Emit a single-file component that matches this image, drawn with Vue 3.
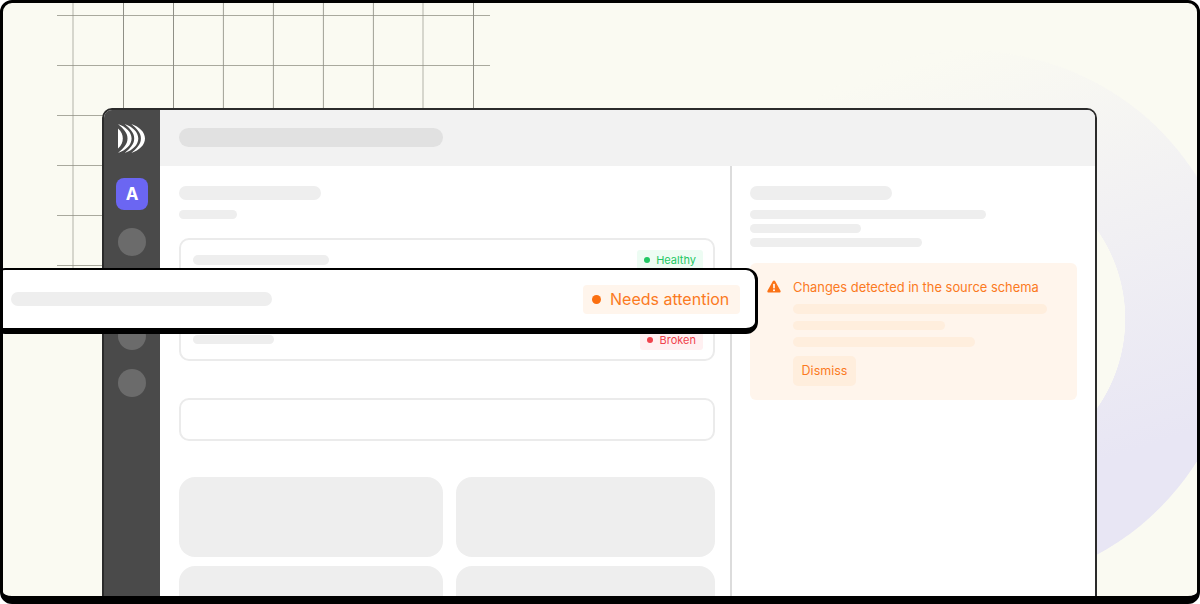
<script setup>
const hLines = [12.5, 62.5, 112.5, 162.5, 212.5, 262.5]
const vLines = [
  { x: 70, o: 0.45, w: 1.5 },
  { x: 120.5, o: 1, w: 1 },
  { x: 170.5, o: 1, w: 1 },
  { x: 220.4, o: 0.85, w: 1 },
  { x: 270.4, o: 0.85, w: 1 },
  { x: 320.4, o: 0.85, w: 1 },
  { x: 370.4, o: 0.85, w: 1 },
  { x: 420, o: 0.45, w: 1.5 },
  { x: 470.5, o: 1, w: 1 }
]
const navDots = [1, 2, 3, 4]
const alertLines = ['l1', 'l2', 'l3']
</script>

<template>
  <div class="frame">
    <div class="ring"></div>
    <svg class="grid" width="490" height="265" viewBox="0 0 490 265">
      <line v-for="y in hLines" :key="'h' + y" x1="54" x2="487" :y1="y" :y2="y" stroke="#a9a99e" />
      <line
        v-for="v in vLines"
        :key="'v' + v.x"
        :x1="v.x"
        :x2="v.x"
        y1="0"
        y2="265"
        stroke="#8f8f86"
        :stroke-opacity="v.o"
        :stroke-width="v.w"
      />
    </svg>

    <div class="window">
      <aside class="sidebar">
        <svg class="logo" width="28" height="29" viewBox="0 0 28 29" fill="#fff">
          <path d="M0 4.5C3.4 7.5 4.8 10.8 4.8 14.5C4.8 18.2 3.4 21.5 0 24.5Z" />
          <path d="M0 0C8 3 13.6 8 13.6 14.5C13.6 21 8 26 0 29C5 24.5 9.5 20.5 9.5 14.5C9.5 8.5 5 4.500 0 0Z" />
          <path d="M6.700 0C14.700 3 20.300 8 20.300 14.500C20.300 21 14.700 26 6.700 29C11.700 24.500 16.200 20.500 16.200 14.500C16.200 8.500 11.700 4.500 6.700 0Z" />
          <path d="M13.400 0C21.400 3 27 8 27 14.500C27 21 21.400 26 13.400 29C18.400 24.500 22.900 20.500 22.900 14.500C22.900 8.500 18.400 4.500 13.400 0Z" />
        </svg>
        <div class="avatar">A</div>
        <div class="nav-dots">
          <span v-for="d in navDots" :key="d" class="nav-dot"></span>
        </div>
      </aside>

      <div class="content">
        <header class="topbar"><span class="top-pill"></span></header>
        <div class="panes">
          <section class="main">
            <div class="sk title-pill"></div>
            <div class="sk sub-pill"></div>
            <div class="list-card">
              <div class="row">
                <span class="sk row-pill-a"></span>
                <span class="badge healthy"><i class="dot"></i>Healthy</span>
              </div>
              <div class="row"></div>
              <div class="row">
                <span class="sk row-pill-b"></span>
                <span class="badge broken"><i class="dot"></i>Broken</span>
              </div>
            </div>
            <div class="empty-card"></div>
            <div class="tiles">
              <div class="tile"></div>
              <div class="tile"></div>
              <div class="tile"></div>
              <div class="tile"></div>
            </div>
          </section>

          <section class="side">
            <div class="sk side-title"></div>
            <div class="side-lines">
              <div class="sk sl1"></div>
              <div class="sk sl2"></div>
              <div class="sk sl3"></div>
            </div>
            <div class="alert">
              <svg class="warn" width="14" height="13" viewBox="0 0 14 13">
                <path
                  d="M5.900 1.100C6.400 .2 7.600 .2 8.100 1.100L13.500 10.700C14 11.600 13.400 12.600 12.400 12.600H1.600C.6 12.600 0 11.600 .5 10.700Z"
                  fill="#fb7316"
                />
                <rect x="6.200" y="3.800" width="1.600" height="4.600" rx=".7" fill="#fff" />
                <circle cx="7" cy="10.200" r="1" fill="#fff" />
              </svg>
              <div class="alert-body">
                <div class="alert-title">Changes detected in the source schema</div>
                <div v-for="l in alertLines" :key="l" class="alert-line" :class="l"></div>
                <button class="dismiss" type="button">Dismiss</button>
              </div>
            </div>
          </section>
        </div>
      </div>
    </div>

    <div class="band">
      <span class="sk band-pill"></span>
      <span class="band-badge"><i class="band-dot"></i>Needs attention</span>
    </div>
  </div>
</template>

<style scoped>
.frame {
  position: relative;
  box-sizing: border-box;
  width: 1200px;
  height: 604px;
  overflow: hidden;
  border: solid #000;
  border-width: 3px 3px 8px;
  border-radius: 12px;
  background: #fafaf2;
  padding: 105px 0 0 99px;
  font-family: Inter, "Liberation Sans", sans-serif;
}
.ring {
  position: absolute;
  left: 699px;
  top: 48px;
  width: 536px;
  height: 536px;
  border-radius: 50%;
  background: linear-gradient(162deg, #fafaf2 12%, #e8e6f4 76%);
  -webkit-mask: radial-gradient(circle, transparent 155px, #000 155.5px);
  mask: radial-gradient(circle, transparent 155px, #000 155.5px);
}
.grid {
  position: absolute;
  left: 0;
  top: 0;
}
.window {
  position: relative;
  box-sizing: border-box;
  display: flex;
  width: 995px;
  height: 510px;
  overflow: hidden;
  border: 2px solid #2b2b2b;
  border-radius: 10px;
  background: #fff;
}
.sidebar {
  display: flex;
  flex-direction: column;
  align-items: center;
  flex: 0 0 56px;
  padding-top: 14px;
  box-sizing: border-box;
  background: #4a4a4a;
}
.logo {
  display: block;
}
.avatar {
  display: flex;
  align-items: center;
  justify-content: center;
  width: 32px;
  height: 32px;
  margin-top: 25px;
  border-radius: 8px;
  background: #6b66f2;
  color: #fff;
  font-size: 17px;
  font-weight: 700;
}
.nav-dots {
  display: flex;
  flex-direction: column;
  gap: 19px;
  margin-top: 18px;
}
.nav-dot {
  width: 28px;
  height: 28px;
  border-radius: 50%;
  background: #6b6b6b;
}
.content {
  flex: 1;
  min-width: 0;
}
.topbar {
  box-sizing: border-box;
  display: flex;
  align-items: center;
  height: 56px;
  padding: 0 0 1px 19px;
  background: #f2f2f2;
}
.top-pill {
  width: 264px;
  height: 19px;
  border-radius: 10px;
  background: #e1e1e1;
}
.panes {
  display: flex;
}
.main {
  box-sizing: border-box;
  flex: 0 0 570px;
  padding: 20px 15px 0 19px;
}
.sk {
  display: block;
  border-radius: 8px;
  background: #eeeeee;
}
.title-pill {
  width: 142px;
  height: 14px;
}
.sub-pill {
  width: 58px;
  height: 9px;
  margin-top: 10px;
}
.list-card {
  box-sizing: border-box;
  display: grid;
  grid-template-rows: 40px 40px 39px;
  height: 123px;
  margin-top: 19px;
  padding: 0 10px 0 12px;
  border: 2px solid #ebebeb;
  border-radius: 10px;
}
.row {
  display: flex;
  align-items: center;
  justify-content: space-between;
}
.row-pill-a {
  width: 136px;
  height: 10px;
}
.row-pill-b {
  width: 81px;
  height: 9px;
}
.badge {
  display: flex;
  align-items: center;
  height: 20px;
  padding: 0 7px;
  gap: 6px;
  border-radius: 3px;
  font-size: 11px;
  line-height: 20px;
}
.dot {
  width: 6px;
  height: 6px;
  border-radius: 50%;
  background: currentColor;
}
.healthy {
  background: #edfcf3;
  color: #22c763;
}
.broken {
  gap: 7px;
  background: #fff0f1;
  color: #f0434d;
}
.empty-card {
  box-sizing: border-box;
  height: 43px;
  margin-top: 37px;
  border: 2px solid #ebebeb;
  border-radius: 10px;
}
.tiles {
  display: grid;
  grid-template-columns: 264px 259px;
  grid-auto-rows: 80px;
  column-gap: 13px;
  row-gap: 9px;
  margin-top: 36px;
}
.tile {
  border-radius: 16px;
  background: #eeeeee;
}
.side {
  box-sizing: border-box;
  flex: 1;
  min-width: 0;
  min-height: 440px;
  padding: 20px 18px 0;
  border-left: 2px solid #dcdcdc;
}
.side-title {
  width: 142px;
  height: 14px;
}
.side-lines {
  display: flex;
  flex-direction: column;
  gap: 5px;
  margin-top: 10px;
}
.side-lines .sk {
  height: 9px;
}
.sl1 {
  width: 236px;
}
.sl2 {
  width: 111px;
}
.sl3 {
  width: 172px;
}
.alert {
  box-sizing: border-box;
  display: flex;
  height: 137px;
  margin-top: 16px;
  padding: 17px 17px 0;
  gap: 12px;
  border-radius: 6px;
  background: #fff5ec;
}
.warn {
  flex: none;
}
.alert-body {
  flex: 1;
  min-width: 0;
}
.alert-title {
  margin-top: 1px;
  color: #fb7a1f;
  font-size: 12.9px;
  line-height: 14px;
  white-space: nowrap;
}
.alert-line {
  height: 9.500px;
  margin-bottom: 7px;
  border-radius: 5px;
  background: #ffeedd;
}
.l1 {
  width: 254px;
  margin-top: 9px;
}
.l2 {
  width: 152px;
}
.l3 {
  width: 182px;
}
.dismiss {
  display: block;
  width: 63px;
  height: 30px;
  margin-top: 9px;
  padding: 0;
  border: 0;
  border-radius: 5px;
  background: #ffeedd;
  color: #fb7a1f;
  font: 12.5px Inter, "Liberation Sans", sans-serif;
}
.band {
  position: absolute;
  left: -10px;
  top: 265px;
  box-sizing: border-box;
  display: flex;
  align-items: center;
  justify-content: space-between;
  width: 765px;
  height: 66px;
  padding: 0 15px 0 16px;
  border: solid #000;
  border-width: 2px 3px 6px 2px;
  border-radius: 12px;
  background: #fff;
}
.band-pill {
  width: 261px;
  height: 14px;
}
.band-badge {
  display: flex;
  align-items: center;
  box-sizing: border-box;
  width: 157px;
  height: 29px;
  padding-left: 9px;
  gap: 9px;
  border-radius: 4px;
  background: #fff5ec;
  color: #fb7a1f;
  font-size: 16px;
  line-height: 28px;
  white-space: nowrap;
}
.band-dot {
  flex: none;
  width: 9px;
  height: 9px;
  border-radius: 50%;
  background: #fb6f10;
}
</style>

<style>
body {
  margin: 0;
  background: #fff;
}
</style>
